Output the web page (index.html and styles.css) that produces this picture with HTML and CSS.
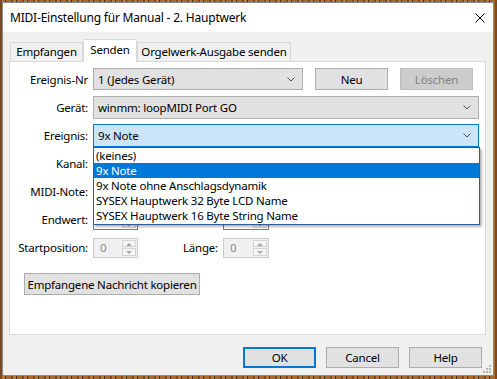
FILE: index.html
```html
<!DOCTYPE html>
<html lang="de">
<head>
    <meta charset="UTF-8">
    <title>MIDI-Einstellung</title>
    <link rel="stylesheet" href="styles.css">
</head>
<body>
    <div class="window">
        <div class="titlebar">
            <span class="title">MIDI-Einstellung für Manual - 2. Hauptwerk</span>
            <svg class="close" width="10" height="10" viewBox="0 0 10 10"><path d="M0.5 0.5 L9.5 9.5 M9.5 0.5 L0.5 9.5" stroke="#000" stroke-width="1"/></svg>
        </div>

        <div class="client">
            <div class="tabs">
                <div class="tab tab-1">Empfangen</div>
                <div class="tab tab-2 active">Senden</div>
                <div class="tab tab-3">Orgelwerk-Ausgabe senden</div>
            </div>

            <div class="panel">
                <div class="form">
                    <div class="row">
                        <span class="lbl">Ereignis-Nr</span>
                        <div class="combo short">
                            <span>1 (Jedes Gerät)</span>
                            <svg class="chev" width="8" height="5" viewBox="0 0 8 5"><polyline points="0.5,0.5 4,4 7.5,0.5" fill="none" stroke="#555"/></svg>
                        </div>
                        <button class="btn">Neu</button>
                        <button class="btn disabled">Löschen</button>
                    </div>
                    <div class="row">
                        <span class="lbl">Gerät:</span>
                        <div class="combo full">
                            <span>winmm: loopMIDI Port GO</span>
                            <svg class="chev" width="8" height="5" viewBox="0 0 8 5"><polyline points="0.5,0.5 4,4 7.5,0.5" fill="none" stroke="#555"/></svg>
                        </div>
                    </div>
                    <div class="row">
                        <span class="lbl">Ereignis:</span>
                        <div class="combo full focus">
                            <span>9x Note</span>
                            <svg class="chev" width="8" height="5" viewBox="0 0 8 5"><polyline points="0.5,0.5 4,4 7.5,0.5" fill="none" stroke="#555"/></svg>
                            <div class="droplist">
                                <div class="item">(keines)</div>
                                <div class="item selected">9x Note</div>
                                <div class="item">9x Note ohne Anschlagsdynamik</div>
                                <div class="item">SYSEX Hauptwerk 32 Byte LCD Name</div>
                                <div class="item">SYSEX Hauptwerk 16 Byte String Name</div>
                            </div>
                        </div>
                    </div>
                    <div class="row">
                        <span class="lbl">Kanal:</span>
                        <div class="spin">
                            <span class="val"></span>
                            <span class="arrows"><span class="up"></span><span class="down"></span></span>
                        </div>
                    </div>
                    <div class="row">
                        <span class="lbl">MIDI-Note:</span>
                        <div class="spin">
                            <span class="val"></span>
                            <span class="arrows"><span class="up"></span><span class="down"></span></span>
                        </div>
                    </div>
                    <div class="row">
                        <span class="lbl">Endwert:</span>
                        <div class="spin">
                            <span class="val"></span>
                            <span class="arrows"><span class="up"></span><span class="down"></span></span>
                        </div>
                        <span class="sublbl"></span>
                        <div class="spin wide">
                            <span class="val"></span>
                            <span class="arrows"><span class="up"></span><span class="down"></span></span>
                        </div>
                    </div>
                    <div class="row">
                        <span class="lbl">Startposition:</span>
                        <div class="spin disabled">
                            <span class="val">0</span>
                            <span class="arrows"><span class="up"></span><span class="down"></span></span>
                        </div>
                        <span class="sublbl">Länge:</span>
                        <div class="spin wide disabled">
                            <span class="val">0</span>
                            <span class="arrows"><span class="up"></span><span class="down"></span></span>
                        </div>
                    </div>
                </div>

                <button class="btn copy">Empfangene Nachricht kopieren</button>
            </div>

            <div class="footer">
                <button class="btn default">OK</button>
                <button class="btn">Cancel</button>
                <button class="btn">Help</button>
            </div>
        </div>

        <svg class="grip" width="8" height="8" viewBox="0 0 8 8">
            <rect x="6" y="0" width="2" height="2" fill="#b4b4b4"/>
            <rect x="3" y="3" width="2" height="2" fill="#b4b4b4"/>
            <rect x="6" y="3" width="2" height="2" fill="#b4b4b4"/>
            <rect x="0" y="6" width="2" height="2" fill="#b4b4b4"/>
            <rect x="3" y="6" width="2" height="2" fill="#b4b4b4"/>
            <rect x="6" y="6" width="2" height="2" fill="#b4b4b4"/>
        </svg>
    </div>
</body>
</html>
```

FILE: styles.css
```css
* {
    margin: 0;
    padding: 0;
    box-sizing: border-box;
}

html, body {
    width: 497px;
    height: 379px;
    overflow: hidden;
}

body {
    font-family: "Noto Sans", "Open Sans", sans-serif;
    font-size: 11.5px;
    letter-spacing: -0.2px;
    color: #000;
    background-color: #9a6230;
    background-image: repeating-linear-gradient(90deg, #7b4a21 0 2px, #b27840 2px 5px, #4e2e12 5px 6px, #a46a34 6px 11px);
    padding: 2px 0 0 2px;
}

.window {
    position: relative;
    width: 492px;
    height: 374px;
    border: 1px solid #8a8a8a;
    background-color: #f0f0f0;
    display: flex;
    flex-direction: column;
}

.titlebar {
    height: 29px;
    background-color: #fff;
    display: flex;
    align-items: center;
    justify-content: space-between;
    padding: 0 8px 0 7px;
    flex-shrink: 0;
}

.title {
    white-space: nowrap;
    font-size: 12px;
}

.client {
    flex: 1;
    padding: 7px 7px 0 6px;
}

/* tabs */
.tabs {
    display: flex;
    align-items: flex-end;
    height: 22px;
    padding-left: 1px;
}

.tab {
    height: 19px;
    border: 1px solid #d9d9d9;
    border-bottom: none;
    background-color: #f0f0f0;
    text-align: center;
    line-height: 17px;
    white-space: nowrap;
}

.tab-1 { width: 73px; }
.tab-2 { width: 54px; }
.tab-3 { width: 154px; }

.tab.active {
    position: relative;
    z-index: 1;
    height: 23px;
    margin-bottom: -1px;
    background-color: #fff;
    line-height: 19px;
}

.panel {
    height: 274px;
    border: 1px solid #d9d9d9;
    background-color: #fff;
    padding-top: 6px;
}

.form {
    display: flex;
    flex-direction: column;
    gap: 5px;
}

.row {
    display: flex;
    align-items: center;
    height: 23px;
}

.lbl {
    width: 78px;
    margin-right: 5px;
    text-align: right;
    white-space: nowrap;
    flex-shrink: 0;
}

.sublbl {
    width: 80px;
    margin-right: 5px;
    text-align: right;
    white-space: nowrap;
    flex-shrink: 0;
}

/* combo boxes */
.combo {
    position: relative;
    height: 23px;
    border: 1px solid #adadad;
    background-color: #e1e1e1;
    display: flex;
    align-items: center;
    justify-content: space-between;
    padding: 0 7px 0 4px;
    white-space: nowrap;
}

.combo.short {
    width: 210px;
    height: 22px;
    align-self: flex-start;
}

.combo.full {
    width: 386px;
}

.combo.focus {
    background-color: #cce4f7;
    border-color: #0078d7;
}

.droplist {
    position: absolute;
    left: -1px;
    top: 22px;
    width: 387px;
    background-color: #fff;
    border: 1px solid #2a5f96;
    box-shadow: 2px 2px 2px rgba(0, 0, 0, 0.28);
    z-index: 5;
    padding-bottom: 1px;
}

.item {
    height: 15px;
    line-height: 15px;
    padding-left: 2px;
}

.item.selected {
    background-color: #0078d7;
    color: #fff;
}

/* buttons */
.btn {
    height: 22px;
    width: 73px;
    border: 1px solid #adadad;
    background-color: #e1e1e1;
    font: inherit;
    letter-spacing: inherit;
    color: #000;
    white-space: nowrap;
    align-self: flex-start;
}

.row .btn {
    margin-left: 12px;
}

.btn.disabled {
    background-color: #cccccc;
    border-color: #bfbfbf;
    color: #838383;
}

.btn.copy {
    width: 176px;
    margin: 14px 0 0 14px;
}

.footer {
    display: flex;
    justify-content: flex-end;
    gap: 10px;
    padding: 12px 4px 0 0;
}

.footer .btn {
    height: 21px;
}

.btn.default {
    border: 2px solid #0078d7;
}

/* spin controls */
.spin {
    width: 45px;
    height: 20px;
    border: 1px solid #7a7a7a;
    background-color: #fff;
    display: flex;
}

.spin.wide {
    width: 46px;
}

.spin .val {
    flex: 1;
    padding-left: 6px;
    line-height: 18px;
}

.spin .arrows {
    width: 15px;
    display: flex;
    flex-direction: column;
    padding: 1px 1px 1px 0;
    gap: 1px;
}

.spin .up,
.spin .down {
    flex: 1;
    border: 1px solid #d4d4d4;
    background-color: #f5f5f5;
    position: relative;
}

.spin .up::after,
.spin .down::after {
    content: "";
    position: absolute;
    left: 3px;
    top: 2px;
    border-left: 3px solid transparent;
    border-right: 3px solid transparent;
}

.spin .up::after {
    border-bottom: 3px solid #606060;
}

.spin .down::after {
    border-top: 3px solid #606060;
}

.spin.disabled {
    border-color: #cccccc;
    background-color: #f0f0f0;
}

.spin.disabled .val {
    color: #8d8d8d;
}

.spin.disabled .up::after {
    border-bottom-color: #a8a8a8;
}

.spin.disabled .down::after {
    border-top-color: #a8a8a8;
}

.grip {
    position: absolute;
    right: 2px;
    bottom: 2px;
}
```
